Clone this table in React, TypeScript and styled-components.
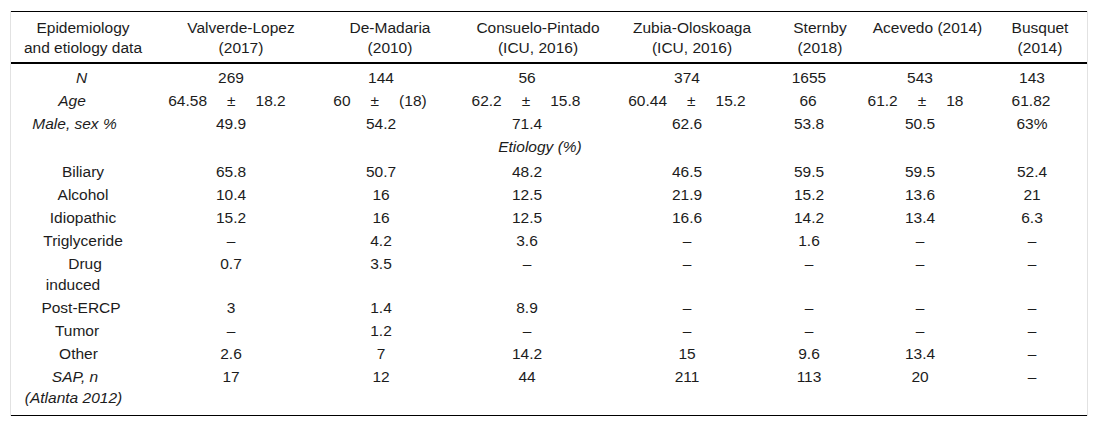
import React from 'react';
import styled, { createGlobalStyle } from 'styled-components';

const Global = createGlobalStyle`
  html, body { margin: 0; padding: 0; background: #ffffff; }
  body { font-family: "Liberation Sans", Arial, sans-serif; color: #1c1c1c; }
`;

const pad = (s: number) => `${Math.max(0, -2 * s)}px 0 ${Math.max(0, 2 * s)}px`;

const Frame = styled.div`
  margin: 11px 0 0 10px;
  width: 1076px;
  border-left: 1px solid #e2e2e2;
  border-right: 1px solid #e2e2e2;
`;

const Table = styled.table`
  width: 1076px;
  table-layout: fixed;
  border-collapse: separate;
  border-spacing: 0;
  font-size: 15.5px;
`;

const Col = styled.col<{ $w: number }>`
  width: ${(p) => p.$w}px;
`;

const Head = styled.th<{ $shift: number }>`
  font-weight: normal;
  text-align: center;
  vertical-align: top;
  line-height: 20px;
  padding-top: 6px;
  padding-bottom: 4px;
  padding-left: ${(p) => Math.max(0, 2 * p.$shift)}px;
  padding-right: ${(p) => Math.max(0, -2 * p.$shift)}px;
  border-top: 1px solid #000;
  border-bottom: 2px solid #000;
  white-space: nowrap;
`;

const Cell = styled.td<{ $shift?: number; $italic?: boolean; $pt: number; $pb: number; $last?: boolean }>`
  text-align: center;
  vertical-align: top;
  line-height: 21px;
  white-space: nowrap;
  font-style: ${(p) => (p.$italic ? 'italic' : 'normal')};
  padding-top: ${(p) => p.$pt}px;
  padding-bottom: ${(p) => p.$pb}px;
  padding-left: ${(p) => Math.max(0, 2 * (p.$shift ?? 0))}px;
  padding-right: ${(p) => Math.max(0, -2 * (p.$shift ?? 0))}px;
  border-bottom: ${(p) => (p.$last ? '1px solid #000' : 'none')};
`;

const Line = styled.span<{ $shift: number }>`
  display: block;
  padding-left: ${(p) => Math.max(0, 2 * p.$shift)}px;
  padding-right: ${(p) => Math.max(0, -2 * p.$shift)}px;
`;

const Triplet = styled.span`
  display: flex;
  justify-content: center;
  gap: 20px;
`;

type Study = { head: string[]; w: number; h: number; d: number; a: number; age: string[] };

const studies: Study[] = [
  { head: ['Valverde-Lopez', '(2017)'], w: 160, h: 6, d: -4, a: -8, age: ['64.58', '±', '18.2'] },
  { head: ['De-Madaria', '(2010)'], w: 137, h: 6.5, d: -2.5, a: -3.5, age: ['60', '±', '(18)'] },
  { head: ['Consuelo-Pintado', '(ICU, 2016)'], w: 163, h: 4.5, d: -6.5, a: -7.5, age: ['62.2', '±', '15.8'] },
  { head: ['Zubia-Oloskoaga', '(ICU, 2016)'], w: 163, h: -4.5, d: -9.5, a: -9.5, age: ['60.44', '±', '15.2'] },
  { head: ['Sternby', '(2018)'], w: 83, h: 0.5, d: -10.5, a: -11.5, age: ['66'] },
  { head: ['Acevedo (2014)'], w: 135, h: -1, d: -8.5, a: -13, age: ['61.2', '±', '18'] },
  { head: ['Busquet', '(2014)'], w: 91, h: -1.5, d: -9.5, a: -10.5, age: ['61.82'] },
];

type Row = {
  label: { text: string; shift: number }[];
  italic?: boolean;
  values?: string[];
  age?: boolean;
  pt?: number;
  pb?: number;
  last?: boolean;
};

const rows: Row[] = [
  { label: [{ text: 'N', shift: -1.5 }], italic: true, values: ['269', '144', '56', '374', '1655', '543', '143'], pt: 3 },
  { label: [{ text: 'Age', shift: -11 }], italic: true, age: true },
  { label: [{ text: 'Male, sex %', shift: -8.5 }], italic: true, values: ['49.9', '54.2', '71.4', '62.6', '53.8', '50.5', '63%'] },
  { label: [{ text: 'Biliary', shift: 0 }], values: ['65.8', '50.7', '48.2', '46.5', '59.5', '59.5', '52.4'] },
  { label: [{ text: 'Alcohol', shift: 0 }], values: ['10.4', '16', '12.5', '21.9', '15.2', '13.6', '21'] },
  { label: [{ text: 'Idiopathic', shift: 0 }], values: ['15.2', '16', '12.5', '16.6', '14.2', '13.4', '6.3'] },
  { label: [{ text: 'Triglyceride', shift: 0 }], values: ['–', '4.2', '3.6', '–', '1.6', '–', '–'] },
  { label: [{ text: 'Drug', shift: 2 }, { text: 'induced', shift: -10 }], values: ['0.7', '3.5', '–', '–', '–', '–', '–'] },
  { label: [{ text: 'Post-ERCP', shift: -2 }], values: ['3', '1.4', '8.9', '–', '–', '–', '–'] },
  { label: [{ text: 'Tumor', shift: -6 }], values: ['–', '1.2', '–', '–', '–', '–', '–'] },
  { label: [{ text: 'Other', shift: -4.5 }], values: ['2.6', '7', '14.2', '15', '9.6', '13.4', '–'] },
  {
    label: [{ text: 'SAP, n', shift: -8 }, { text: '(Atlanta 2012)', shift: -9.5 }],
    italic: true,
    values: ['17', '12', '44', '211', '113', '20', '–'],
    pb: 7,
    last: true,
  },
];

function BodyRow({ row }: { row: Row }) {
  const pt = row.pt ?? 1;
  const pb = row.pb ?? 1;
  return (
    <tr>
      <Cell $pt={pt} $pb={pb} $italic={row.italic} $last={row.last}>
        {row.label.map((l) => (
          <Line key={l.text} $shift={l.shift}>
            {l.text}
          </Line>
        ))}
      </Cell>
      {studies.map((s, i) =>
        row.age ? (
          <Cell key={i} $pt={pt} $pb={pb} $shift={s.a} $last={row.last}>
            <Triplet>
              {s.age.map((v, j) => (
                <span key={j}>{v}</span>
              ))}
            </Triplet>
          </Cell>
        ) : (
          <Cell key={i} $pt={pt} $pb={pb} $shift={s.d} $last={row.last}>
            {row.values![i]}
          </Cell>
        )
      )}
    </tr>
  );
}

export default function App() {
  return (
    <>
      <Global />
      <Frame>
        <Table>
          <colgroup>
            <Col $w={144} />
            {studies.map((s, i) => (
              <Col key={i} $w={s.w} />
            ))}
          </colgroup>
          <thead>
            <tr>
              <Head $shift={0}>
                Epidemiology
                <br />
                and etiology data
              </Head>
              {studies.map((s, i) => (
                <Head key={i} $shift={s.h}>
                  {s.head.map((t, j) => (
                    <React.Fragment key={j}>
                      {j > 0 && <br />}
                      {t}
                    </React.Fragment>
                  ))}
                </Head>
              ))}
            </tr>
          </thead>
          <tbody>
            {rows.slice(0, 3).map((r) => (
              <BodyRow key={r.label[0].text} row={r} />
            ))}
            <tr>
              <Cell colSpan={8} $italic $pt={1} $pb={3} $shift={-9}>
                Etiology (%)
              </Cell>
            </tr>
            {rows.slice(3).map((r) => (
              <BodyRow key={r.label[0].text} row={r} />
            ))}
          </tbody>
        </Table>
      </Frame>
    </>
  );
}
